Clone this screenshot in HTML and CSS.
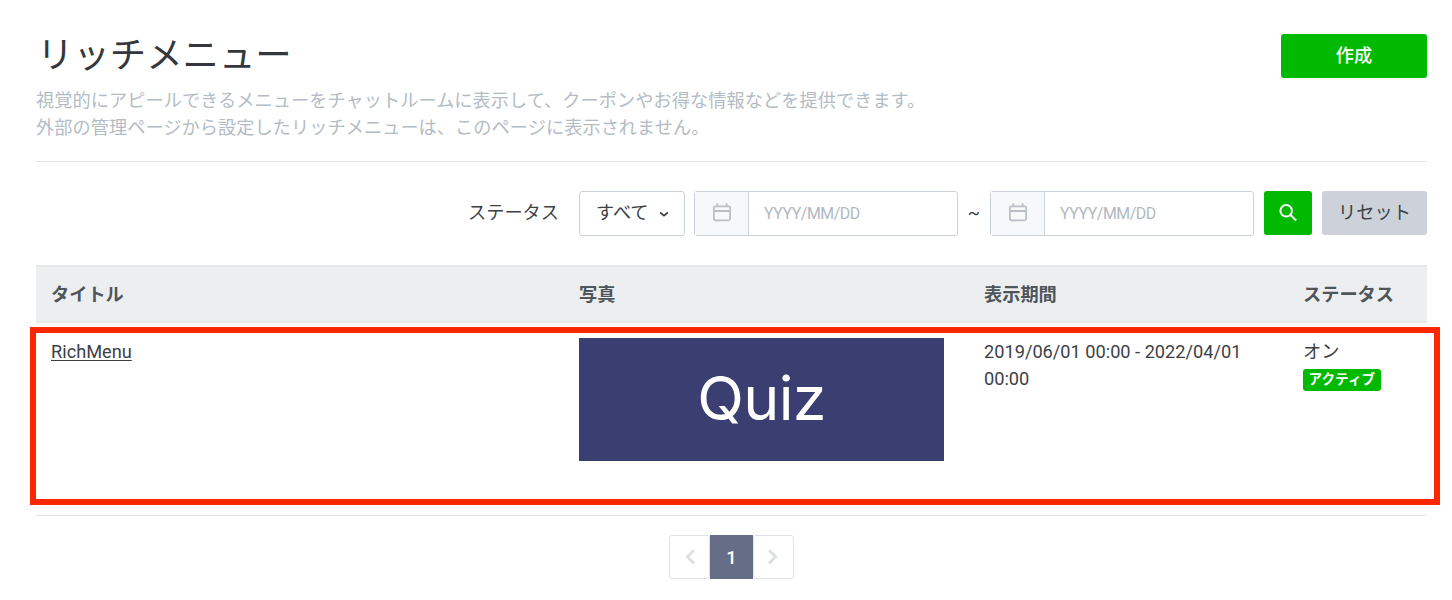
FILE: index.html
```html
<!DOCTYPE html>
<html lang="ja">
<head>
<meta charset="utf-8">
<title>リッチメニュー</title>
<link rel="stylesheet" href="styles.css">
</head>
<body>
<main class="page">
  <header class="page-header">
    <div>
      <h1 class="title">リッチメニュー</h1>
      <p class="lead">視覚的にアピールできるメニューをチャットルームに表示して、クーポンやお得な情報などを提供できます。<br>外部の管理ページから設定したリッチメニューは、このページに表示されません。</p>
    </div>
    <button class="btn btn-create">作成</button>
  </header>

  <div class="filters">
    <span class="filter-label">ステータス</span>
    <button class="select">すべて
      <svg class="caret" width="10" height="7" viewBox="0 0 10 7"><path d="M1.2 1.5 5 4.6 8.8 1.5" fill="none" stroke="currentColor" stroke-width="1.7"/></svg>
    </button>
    <div class="date">
      <span class="date-icon"><svg width="20" height="20" viewBox="0 0 20 20" fill="none" stroke="currentColor" stroke-width="1.8"><rect x="1.9" y="3.3" width="16.2" height="14" rx="1.5"/><path d="M2 8h16M5.4 .3v3M14.6 .3v3"/></svg></span>
      <span class="date-input">YYYY/MM/DD</span>
    </div>
    <span class="tilde">~</span>
    <div class="date">
      <span class="date-icon"><svg width="20" height="20" viewBox="0 0 20 20" fill="none" stroke="currentColor" stroke-width="1.8"><rect x="1.9" y="3.3" width="16.2" height="14" rx="1.5"/><path d="M2 8h16M5.4 .3v3M14.6 .3v3"/></svg></span>
      <span class="date-input">YYYY/MM/DD</span>
    </div>
    <button class="btn btn-search"><svg width="20" height="20" viewBox="0 0 20 20" fill="none" stroke="currentColor" stroke-width="2"><circle cx="8.2" cy="7.8" r="5.8"/><path d="m12.4 12 5.8 5.4"/></svg></button>
    <button class="btn btn-reset">リセット</button>
  </div>

  <div class="table">
    <div class="row head">
      <span>タイトル</span><span>写真</span><span>表示期間</span><span>ステータス</span>
    </div>
    <div class="row item">
      <div><a class="link">RichMenu</a></div>
      <div><div class="thumb">Quiz</div></div>
      <div class="period">2019/06/01 00:00 - 2022/04/01 00:00</div>
      <div class="status">オン<span class="badge">アクティブ</span></div>
    </div>
  </div>

  <nav class="pagination">
    <span class="page-link"><svg width="12" height="18" viewBox="0 0 12 18"><path d="M10 2.2 3.4 8.8l6.6 6.6" fill="none" stroke="currentColor" stroke-width="2.8"/></svg></span>
    <span class="page-link active">1</span>
    <span class="page-link"><svg width="12" height="18" viewBox="0 0 12 18"><path d="m1 2.2 6.6 6.6L1 15.4" fill="none" stroke="currentColor" stroke-width="2.8"/></svg></span>
  </nav>
</main>
</body>
</html>
```
FILE: styles.css
```css
* { box-sizing: border-box; }
body {
  margin: 0;
  background: #fff;
  color: #3c4146;
  font: 18.2px/27px Roboto, "Noto Sans CJK JP", sans-serif;
}
button { font: inherit; color: inherit; }
.page { padding: 34px 25px 0 36px; }
.page-header {
  display: flex;
  justify-content: space-between;
  align-items: flex-start;
  height: 128px;
  border-bottom: 1px solid #e3e5e7;
}
.title { margin: 0; padding: 2px 0 0 1px; font-size: 36.4px; font-weight: 400; line-height: 40px; color: #34383e; }
.lead { margin: 11px 0 0; color: #b3bcc5; letter-spacing: 0.05px; }
.btn {
  display: flex;
  align-items: center;
  justify-content: center;
  height: 44px;
  padding: 0;
  border: 0;
  border-radius: 3px;
}
.btn-create { width: 146px; padding-bottom: 2px; background: #00b900; color: #fff; font-weight: 500; }
.filters { display: flex; justify-content: flex-end; margin-top: 29px; height: 45px; line-height: 43px; }
.filter-label { margin-right: 20px; }
.select {
  display: flex;
  align-items: center;
  gap: 10px;
  width: 106px;
  height: 45px;
  margin-right: 9px;
  padding: 0 0 2px 16px;
  background: #fff;
  border: 1px solid #cbd1d9;
  border-radius: 3px;
}
.caret { margin-top: 3px; }
.date { display: flex; width: 264px; height: 45px; border: 1px solid #cbd1d9; border-radius: 3px; }
.date-icon {
  display: flex;
  align-items: center;
  justify-content: center;
  width: 54px;
  padding-bottom: 2px;
  background: #f7f8fa;
  border-right: 1px solid #cbd1d9;
  color: #b9c0c8;
}
.date-input { padding-left: 15px; font-size: 15.9px; letter-spacing: -0.45px; line-height: 44px; color: #b0b8c1; }
.tilde { width: 32px; text-align: center; }
.btn-search { width: 48px; margin: 0 10px; background: #00b900; color: #fff; }
.btn-reset { width: 105px; padding-bottom: 2px; background: #cdd2da; }
.table { margin-top: 29px; height: 251px; border-bottom: 1px solid #e3e5e7; }
.row { display: grid; grid-template-columns: 528px 405px 319px 1fr; }
.head {
  height: 58px;
  padding-left: 15px;
  background: #edeef0;
  border: solid #e5e7e9;
  border-width: 2px 0;
  font-weight: 700;
  line-height: 56px;
  color: #4e555b;
}
.item {
  height: 178px;
  margin: 4px -13px 0 -6px;
  padding: 5px 0 0 15px;
  border: 6px solid #ff2600;
}
.link { text-decoration: underline; text-underline-offset: 2px; text-decoration-thickness: 1px; }
.thumb {
  width: 365px;
  height: 123px;
  background: #3b3e70;
  color: #fff;
  font: 61px/121px Inter, sans-serif;
  letter-spacing: -0.7px;
  text-align: center;
}
.period { width: 275px; }
.status { display: flex; flex-direction: column; align-items: flex-start; }
.badge {
  height: 22px;
  margin-top: 4px;
  padding: 0 5.5px;
  border-radius: 3px;
  background: #00b900;
  color: #fff;
  font-size: 13.65px;
  font-weight: 700;
  line-height: 21px;
}
.pagination {
  display: flex;
  width: 125px;
  height: 44px;
  margin: 19px 0 0 633px;
}
.page-link {
  display: flex;
  flex: 0 0 41px;
  align-items: center;
  justify-content: center;
  border: 1px solid #dee1e6;
  border-radius: 3px;
  color: #dce0e5;
}
.active { flex-basis: 43px; border-color: #666e87; border-radius: 0; background: #666e87; color: #fff; font-weight: 500; }
```
